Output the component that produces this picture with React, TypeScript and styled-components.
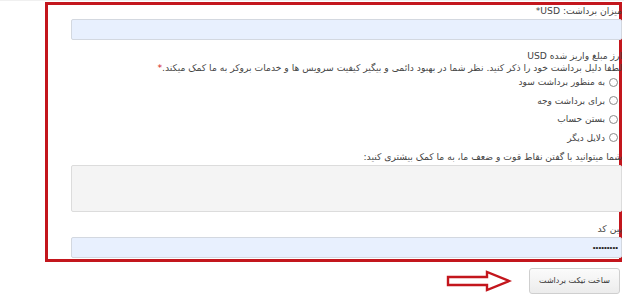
import React from "react";
import styled, { createGlobalStyle } from "styled-components";

const Global = createGlobalStyle`
  html, body { margin: 0; padding: 0; background: #ffffff; }
  body { font-family: "DejaVu Sans", "Noto Sans", sans-serif; overflow: hidden; }
  * { box-sizing: border-box; }
`;

const Page = styled.div`
  width: 624px;
  height: 299px;
  display: flex;
  flex-direction: column;
  border-top: 1px solid #f0f0f0;
`;

const Frame = styled.div`
  margin: 1px 2px 0 45px;
  border: 3px solid #c3161d;
  padding: 0 0 1px 23px;
`;

const Form = styled.form`
  direction: rtl;
  display: flex;
  flex-direction: column;
  margin-right: -3px;
`;

const Label = styled.div<{ $mt?: number }>`
  font-size: 9.2px;
  line-height: 12px;
  color: #444;
  margin-top: ${(p) => p.$mt ?? 0}px;
  white-space: nowrap;
`;

const Star = styled.span<{ $red?: boolean }>`
  color: ${(p) => (p.$red ? "#d21a1a" : "#444")};
`;

const TextInput = styled.input<{ $mt?: number }>`
  display: block;
  width: 100%;
  height: 21px;
  margin-top: ${(p) => p.$mt ?? 0}px;
  border: 1px solid #d3d8e0;
  border-radius: 2px;
  background: #e8f0fe;
  font-size: 8px;
  color: #222;
  padding: 0 3px;
  direction: rtl;
  outline: none;
`;

const Area = styled.textarea`
  display: block;
  width: 100%;
  height: 47px;
  margin-top: 2px;
  border: 1px solid #dcdcdc;
  border-radius: 2px;
  background: #f4f4f4;
  resize: none;
  outline: none;
`;

const RadioList = styled.div`
  display: flex;
  flex-direction: column;
  gap: 6.6px;
  margin-top: 2px;
`;

const RadioRow = styled.label`
  display: flex;
  align-items: center;
  gap: 4px;
  height: 12px;
  font-size: 9px;
  color: #444;
  padding-right: 4px;
`;

const Radio = styled.input`
  appearance: none;
  width: 9px;
  height: 9px;
  margin: 0;
  border: 1px solid #8a8a8a;
  border-radius: 50%;
  background: #fff;
`;

const Footer = styled.div`
  display: flex;
  justify-content: flex-end;
  align-items: center;
  gap: 17px;
  margin-top: 6px;
  padding-right: 4px;
`;

const Button = styled.button`
  width: 91px;
  height: 26px;
  border: 1px solid #cfcfcf;
  border-radius: 3px;
  background: linear-gradient(#fbfbfb, #ececec);
  font-family: "DejaVu Sans", sans-serif;
  font-size: 8px;
  color: #333;
  direction: rtl;
  padding: 0;
`;

function Arrow() {
  return (
    <svg width="66" height="22" viewBox="0 0 66 22">
      <path
        d="M2 7 H41 V2 L63 11 L41 20 V15 H2 Z"
        fill="#fff"
        stroke="#c3161d"
        strokeWidth="2.4"
        strokeLinejoin="miter"
      />
    </svg>
  );
}

export default function App() {
  return (
    <Page>
      <Global />
      <Frame>
        <Form>
          <Label>
            میزان برداشت: USD<Star>*</Star>
          </Label>
          <TextInput $mt={2} defaultValue="" />
          <Label $mt={10}>ارز مبلغ واریز شده USD</Label>
          <Label>
            لطفا دلیل برداشت خود را ذکر کنید. نظر شما در بهبود دائمی و بیگیر کیفیت سرویس ها و خدمات بروکر به ما کمک میکند.<Star $red>*</Star>
          </Label>
          <RadioList>
            <RadioRow>
              <Radio type="radio" name="r" />
              به منظور برداشت سود
            </RadioRow>
            <RadioRow>
              <Radio type="radio" name="r" />
              برای برداشت وجه
            </RadioRow>
            <RadioRow>
              <Radio type="radio" name="r" />
              بستن حساب
            </RadioRow>
            <RadioRow>
              <Radio type="radio" name="r" />
              دلایل دیگر
            </RadioRow>
          </RadioList>
          <Label $mt={7}>شما میتوانید با گفتن نقاط قوت و ضعف ما، به ما کمک بیشتری کنید:</Label>
          <Area />
          <Label $mt={11}>پین کد</Label>
          <TextInput $mt={2} type="password" defaultValue="123456789" />
        </Form>
      </Frame>
      <Footer>
        <Arrow />
        <Button>ساخت تیکت برداشت</Button>
      </Footer>
    </Page>
  );
}
